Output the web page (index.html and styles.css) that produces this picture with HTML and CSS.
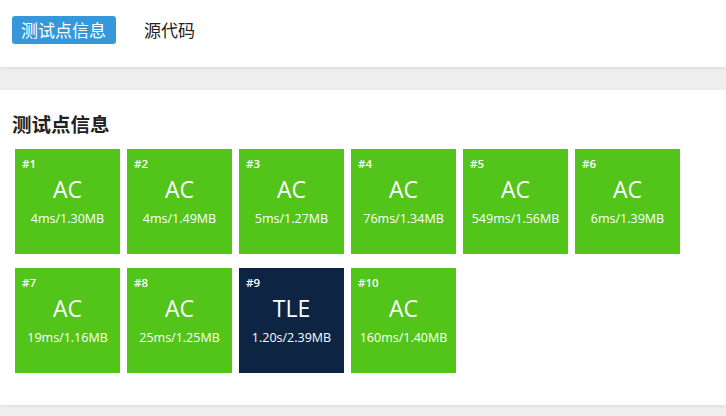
FILE: index.html
```html
<!DOCTYPE html>
<html lang="zh">
<head>
<meta charset="utf-8">
<link rel="stylesheet" href="styles.css">
</head>
<body>
<div class="topbar">
  <span class="tab active">测试点信息</span>
  <span class="tab">源代码</span>
</div>
<div class="gap"></div>
<div class="card">
  <h2 class="title">测试点信息</h2>
  <div class="grid">
    <div class="tile ac"><div class="num">#1</div><div class="st">AC</div><div class="info">4ms/1.30MB</div></div>
    <div class="tile ac"><div class="num">#2</div><div class="st">AC</div><div class="info">4ms/1.49MB</div></div>
    <div class="tile ac"><div class="num">#3</div><div class="st">AC</div><div class="info">5ms/1.27MB</div></div>
    <div class="tile ac"><div class="num">#4</div><div class="st">AC</div><div class="info">76ms/1.34MB</div></div>
    <div class="tile ac"><div class="num">#5</div><div class="st">AC</div><div class="info">549ms/1.56MB</div></div>
    <div class="tile ac"><div class="num">#6</div><div class="st">AC</div><div class="info">6ms/1.39MB</div></div>
    <div class="tile ac"><div class="num">#7</div><div class="st">AC</div><div class="info">19ms/1.16MB</div></div>
    <div class="tile ac"><div class="num">#8</div><div class="st">AC</div><div class="info">25ms/1.25MB</div></div>
    <div class="tile tle"><div class="num">#9</div><div class="st">TLE</div><div class="info">1.20s/2.39MB</div></div>
    <div class="tile ac"><div class="num">#10</div><div class="st">AC</div><div class="info">160ms/1.40MB</div></div>
  </div>
</div>
<div class="bottom"></div>
</body>
</html>
```
FILE: styles.css
```css
html, body {
  margin: 0;
  padding: 0;
  background: #eeeeee;
  font-family: "Open Sans", "Noto Sans CJK SC", sans-serif;
  width: 726px;
  height: 416px;
  overflow: hidden;
}
.topbar {
  background: #fff;
  height: 67px;
  box-sizing: border-box;
  padding: 16px 12px 0;
  display: flex;
  align-items: flex-start;
  gap: 19px;
  box-shadow: 0 1px 3px rgba(0,0,0,0.08);
  position: relative;
}
.tab {
  font-family: "Noto Sans CJK SC", sans-serif;
  font-size: 17px;
  line-height: 28px;
  height: 28px;
  padding: 0 10px 0 9px;
  color: #222;
  border-radius: 3px;
}
.tab.active {
  background: #3498db;
  color: #fff;
}
.gap {
  height: 23px;
}
.card {
  background: #fff;
  height: 315px;
  box-sizing: border-box;
  padding: 21px 12px 0;
  box-shadow: 0 1px 3px rgba(0,0,0,0.08);
}
.title {
  margin: 0;
  font-family: "Noto Sans CJK SC", sans-serif;
  font-size: 19.5px;
  font-weight: 700;
  color: #222;
  line-height: 26px;
  height: 26px;
}
.grid {
  margin-top: 12px;
  margin-left: 3px;
  display: grid;
  grid-template-columns: repeat(6, 105px);
  column-gap: 7px;
  row-gap: 14px;
}
.tile {
  height: 105px;
  color: #fff;
  display: flex;
  flex-direction: column;
  align-items: center;
  position: relative;
}
.ac { background: #52c41a; }
.tle { background: #0e2443; }
.num {
  align-self: flex-start;
  margin: 8px 0 0 7px;
  font-size: 11.5px;
  line-height: 14px;
  font-weight: 600;
}
.st {
  font-size: 23px;
  line-height: 28px;
  margin-top: 4px;
}
.info {
  font-size: 12.5px;
  line-height: 16px;
  margin-top: 8px;
}
```
